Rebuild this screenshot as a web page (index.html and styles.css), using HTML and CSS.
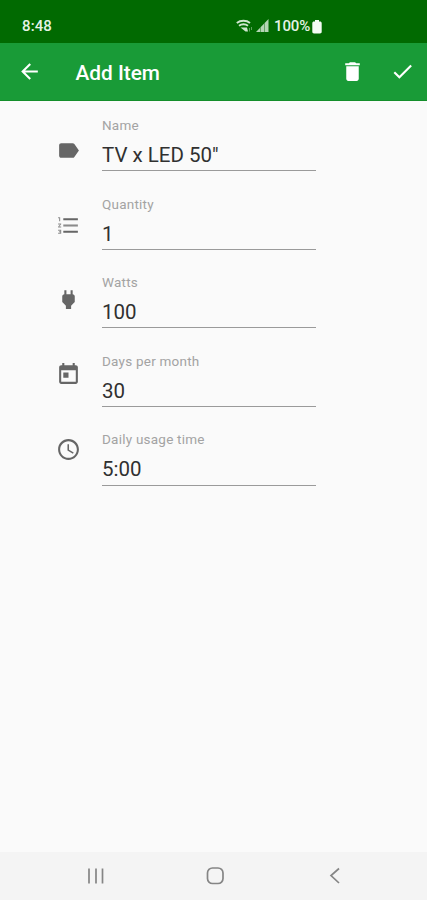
FILE: index.html
```html
<!DOCTYPE html>
<html lang="en">
<head>
<meta charset="utf-8">
<title>Add Item</title>
<link rel="stylesheet" href="styles.css">
</head>
<body>
<div class="screen">
  <div class="status">
    <span class="clock">8:48</span>
    <div class="indicators">
      <svg class="wifi" width="17" height="14" viewBox="0 0 17 14" fill="none" stroke="#cfe6cf" stroke-width="1.900"><path d="M.8 4C4.500 1 10.500 1 14 4M3 6.800C5.500 4.800 9.500 4.800 12 6.800"/><path d="M4.500 8.500h6.500L12 12.500H9.500z" fill="#cfe6cf" stroke="none"/><path d="M13.500 9v3.500M15.500 8v3" stroke-width="1" opacity=".45"/></svg>
      <svg class="signal" width="13" height="13" viewBox="0 0 13 13"><path d="M0 13L12.500 0v13z" fill="#b4d6b4"/><path d="M4.500 8v5M8.500 4v9" stroke="#4c944c" stroke-width=".8"/></svg>
      <span class="percent">100%</span>
      <svg class="battery" width="10" height="14" viewBox="0 0 10 14" fill="#f3fbf3"><path d="M3 0h4v1.500h1c1 0 1.700.7 1.700 1.700v8.600c0 1-.7 1.700-1.700 1.700H2c-1 0-1.700-.7-1.700-1.700V3.200c0-1 .7-1.700 1.700-1.700h1z"/></svg>
    </div>
  </div>
  <header class="appbar">
    <svg class="back" width="25" height="25" viewBox="0 0 24 24" fill="#fff"><path d="M20 11H7.830l5.590-5.590L12 4l-8 8 8 8 1.410-1.410L7.830 13H20v-2z"/></svg>
    <h1 class="title">Add Item</h1>
    <svg class="trash" width="25" height="25" viewBox="0 0 24 24" fill="#fff"><path d="M6 19c0 1.100.9 2 2 2h8c1.100 0 2-.9 2-2V7H6v12zM19 4h-3.500l-1-1h-5l-1 1H5v2h14V4z"/></svg>
    <svg class="check" width="25" height="25" viewBox="0 0 24 24" fill="#fff"><path d="M9 16.170L4.830 12l-1.420 1.410L9 19 21 7l-1.410-1.410z"/></svg>
  </header>
  <main class="form">
    <div class="icons">
      <svg viewBox="0 0 24 24"><path d="M17.630 5.840C17.270 5.330 16.670 5 16 5L5 5.010C3.900 5.010 3 5.900 3 7v10c0 1.100.9 1.990 2 1.990L16 19c.67 0 1.270-.33 1.630-.84L22 12l-4.370-6.160z"/></svg>
      <svg viewBox="0 0 24 24"><path d="M2 17h2v.5H3v1h1v.5H2v1h3v-4H2v1zm1-9h1V4H2v1h1v3zm-1 3h1.800L2 13.100v.9h3v-1H3.200L5 10.900V10H2v1z" opacity=".75"/><path d="M7 5v2h14V5H7zm0 14h14v-2H7v2z"/><path d="M7 13h14v-2H7v2z" opacity=".75"/></svg>
      <svg viewBox="0 0 24 24"><path d="M16.010 7L16 3h-2v4h-4V3H8v4h-.010C7 6.990 6 7.990 6 8.990v5.490L9.500 18v3h5v-3l3.500-3.510v-5.500c0-1-1-2-1.990-1.990z"/></svg>
      <svg viewBox="0 0 24 24"><path d="M19 3h-1V1h-2v2H8V1H6v2H5c-1.110 0-1.990.9-1.990 2L3 19c0 1.100.89 2 2 2h14c1.100 0 2-.9 2-2V5c0-1.100-.9-2-2-2zm0 16H5V8h14v11zM7 10h5v5H7z"/></svg>
      <svg viewBox="0 0 24 24"><path d="M11.990 2C6.470 2 2 6.480 2 12s4.470 10 9.990 10C17.520 22 22 17.520 22 12S17.520 2 11.990 2zM12 20c-4.420 0-8-3.580-8-8s3.580-8 8-8 8 3.580 8 8-3.580 8-8 8zm.5-13H11v6l5.250 3.150.75-1.230-4.500-2.670z"/></svg>
    </div>
    <div class="fields">
      <div class="field"><div class="label">Name</div><div class="value">TV x LED 50"</div></div>
      <div class="field"><div class="label">Quantity</div><div class="value">1</div></div>
      <div class="field"><div class="label">Watts</div><div class="value">100</div></div>
      <div class="field"><div class="label">Days per month</div><div class="value">30</div></div>
      <div class="field"><div class="label">Daily usage time</div><div class="value">5:00</div></div>
    </div>
  </main>
  <nav class="navbar">
    <svg width="24" height="24" viewBox="0 0 24 24"><path d="M5 4.500v15M12 4.500v15M18.500 4.500v15"/></svg>
    <svg width="24" height="24" viewBox="0 0 24 24"><rect x="3.500" y="4" width="15.500" height="15.500" rx="5"/></svg>
    <svg width="24" height="24" viewBox="0 0 24 24"><path d="M16 4.500l-8 7 8 7.500"/></svg>
  </nav>
</div>
</body>
</html>
```
FILE: styles.css
```css
* { box-sizing: border-box; }
body {
  margin: 0;
  font-family: Roboto, "Liberation Sans", sans-serif;
  background: #fafafa;
}
svg { display: block; flex: none; }
.screen {
  width: 427px;
  height: 900px;
  display: flex;
  flex-direction: column;
  overflow: hidden;
}
.status {
  height: 43px;
  background: #016a01;
  color: #e6f3e6;
  display: flex;
  padding: 17px 0 0 22px;
  font-size: 15px;
  line-height: 19px;
}
.clock { width: 214px; font-weight: 500; letter-spacing: 0.1px; }
.indicators { display: flex; align-items: flex-start; }
.wifi { margin-top: 2px; }
.signal { margin: 2px 0 0 3px; }
.percent { margin-left: 5px; width: 37px; font-weight: 500; letter-spacing: -0.1px; }
.battery { margin: 3px 0 0 1px; }
.appbar {
  height: 58px;
  background: #199b37;
  border-bottom: 1px solid #148e2b;
  color: #fff;
  display: flex;
  align-items: center;
  padding: 0 12px 0 17px;
}
.title {
  margin: 2px 0 0 33.500px;
  font-size: 20.800px;
  font-weight: 500;
  line-height: 26px;
  flex: 1;
}
.trash { margin-right: 25px; }
.form { flex: 1; display: flex; padding-left: 56px; }
.icons {
  width: 46px;
  padding-top: 37px;
  display: flex;
  flex-direction: column;
  gap: 49.700px;
}
.icons svg { width: 25px; height: 25px; fill: #666; }
.fields { width: 214px; padding-top: 16px; }
.field { height: 78.600px; }
.label {
  font-size: 13.500px;
  line-height: 16px;
  letter-spacing: 0.230px;
  color: #a3a3a3;
}
.value {
  height: 38.300px;
  padding-top: 9px;
  font-size: 20.500px;
  line-height: 26px;
  color: #303030;
  border-bottom: 1px solid #9a9a9a;
}
.navbar {
  height: 48px;
  background: #f4f4f4;
  display: flex;
  justify-content: space-between;
  align-items: center;
  padding: 0 80px 0 84px;
}
.navbar svg { fill: none; stroke: #858585; stroke-width: 1.700; }
```
